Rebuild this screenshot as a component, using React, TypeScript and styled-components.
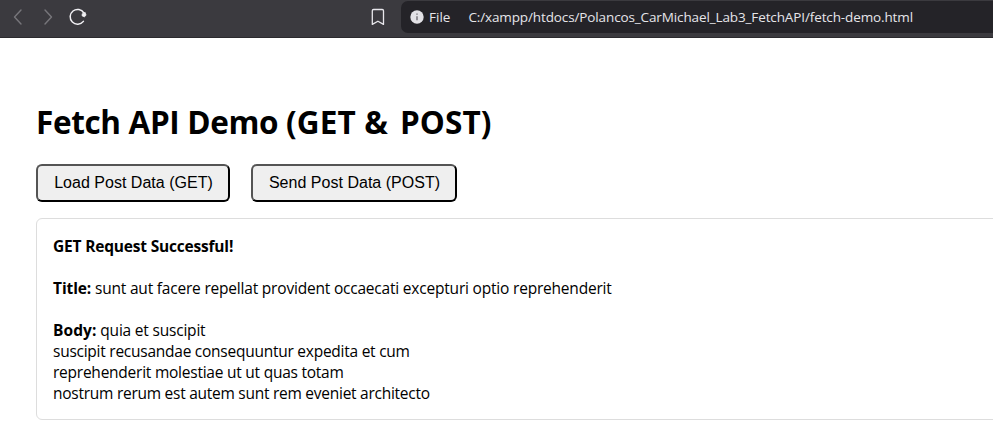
import React from "react";
import styled, { createGlobalStyle } from "styled-components";

const GlobalStyle = createGlobalStyle`
  *, *::before, *::after { box-sizing: border-box; }
  html, body { margin: 0; background: #fff; overflow: hidden; }
  body { color: #000; font-family: "Segoe UI", "Open Sans", "Noto Sans", sans-serif; }
`;

const Browser = styled.div`
  height: 422px;
  overflow: hidden;
`;

const Toolbar = styled.header`
  display: flex;
  align-items: flex-start;
  height: 38px;
  background: #3b3a3f;
  border-bottom: 1px solid #2b2a2e;
`;

const NavIcons = styled.div`
  flex: 1;
  display: flex;
  height: 34px;
  svg { display: block; }
`;

const BookmarkSlot = styled.div`
  width: 35px;
  svg { display: block; }
`;

const AddressBar = styled.div`
  display: flex;
  align-items: center;
  width: 602px;
  height: 32px;
  margin-top: 1px;
  margin-right: -10px;
  padding-left: 9px;
  border-radius: 7px;
  background: #242328;
  color: #e6e5ea;
`;

const AddressText = styled.span<{ $gap: number; $spacing: number }>`
  margin-left: ${(p) => p.$gap}px;
  font-size: 13.5px;
  line-height: 18px;
  letter-spacing: ${(p) => p.$spacing}px;
  white-space: nowrap;
`;

const Page = styled.main`
  padding: 61px 0 0 36px;
`;

const Heading = styled.h1`
  margin: 0;
  height: 43px;
  line-height: 46px;
  font-size: 31.5px;
  font-weight: 700;
  white-space: pre;
`;

const HeadingPart = styled.span<{ $spacing: number }>`
  letter-spacing: ${(p) => p.$spacing}px;
`;

const Actions = styled.div`
  display: flex;
  gap: 21px;
  margin-top: 22px;
`;

const ActionButton = styled.button<{ $width: number }>`
  width: ${(p) => p.$width}px;
  height: 38px;
  padding: 0 0 0 1px;
  border: 2px outset #000;
  border-radius: 6px;
  background: #efefef;
  color: #000;
  font: 16px "Liberation Sans", Arial, sans-serif;
  letter-spacing: 0.02px;
  white-space: nowrap;
`;

const Output = styled.section`
  height: 202px;
  margin-top: 16px;
  margin-right: -10px;
  padding: 16px;
  border: 1px solid #ddd;
  border-radius: 6px;
`;

const Line = styled.div<{ $spacing?: number }>`
  height: 21px;
  line-height: 22px;
  font-size: 15.5px;
  letter-spacing: ${(p) => p.$spacing ?? 0}px;
  white-space: pre;
`;

const Label = styled.strong<{ $spacing?: number }>`
  font-weight: 700;
  letter-spacing: ${(p) => p.$spacing ?? 0}px;
`;

export default function App() {
  return (
    <Browser>
      <GlobalStyle />
      <Toolbar>
        <NavIcons>
          <svg width="100" height="34" fill="none" strokeLinecap="round" strokeLinejoin="round">
            <path d="M21 10L14.5 17L21 24" stroke="#77767b" strokeWidth="1.4" />
            <path d="M45 10L51.5 17L45 24" stroke="#77767b" strokeWidth="1.4" />
            <path d="M83.9 13A7.4 7.4 0 1 0 83.4 21.4" stroke="#f1f0f4" strokeWidth="1.5" />
            <path d="M85.2 12.6L86.1 15.2L84.3 16.9L82 15.8L82.2 14Z" fill="#f1f0f4" stroke="#f1f0f4" strokeWidth="0.7" />
          </svg>
        </NavIcons>
        <BookmarkSlot>
          <svg width="24" height="34" fill="none">
            <path d="M6.3 24.4V10.8Q6.3 9.5 7.6 9.5H16.2Q17.5 9.5 17.5 10.8V24.4L11.9 21.2Z" stroke="#e8e7ec" strokeWidth="1.3" strokeLinejoin="round" />
          </svg>
        </BookmarkSlot>
        <AddressBar>
          <svg width="14" height="14" viewBox="0 0 14 14">
            <circle cx="7" cy="7" r="6.7" fill="#e2e1e6" />
            <path d="M7 6.2V10.2M7 3.5V4.8" stroke="#6f6e74" strokeWidth="1.4" />
          </svg>
          <AddressText $gap={5} $spacing={0}>File</AddressText>
          <AddressText $gap={18} $spacing={-0.12}>
            C:/xampp/htdocs/Polancos_CarMichael_Lab3_FetchAPI/fetch-demo.html
          </AddressText>
        </AddressBar>
      </Toolbar>
      <Page>
        <Heading>
          <HeadingPart $spacing={-0.35}>Fetch API Demo </HeadingPart>
          <HeadingPart $spacing={0.1}>(GET </HeadingPart>
          <HeadingPart $spacing={2}>&amp; </HeadingPart>
          <HeadingPart $spacing={0.1}>POST)</HeadingPart>
        </Heading>
        <Actions>
          <ActionButton $width={194}>Load Post Data (GET)</ActionButton>
          <ActionButton $width={206}>Send Post Data (POST)</ActionButton>
        </Actions>
        <Output>
          <Line><Label $spacing={-0.19}>GET Request Successful!</Label></Line>
          <Line />
          <Line $spacing={-0.2}><Label $spacing={-0.1}>Title:</Label> sunt aut facere repellat provident occaecati excepturi optio reprehenderit</Line>
          <Line />
          <Line $spacing={-0.2}><Label $spacing={0.08}>Body:</Label> quia et suscipit</Line>
          <Line $spacing={-0.25}>suscipit recusandae consequuntur expedita et cum</Line>
          <Line $spacing={-0.24}>reprehenderit molestiae ut ut quas totam</Line>
          <Line $spacing={-0.26}>nostrum rerum est autem sunt rem eveniet architecto</Line>
        </Output>
      </Page>
    </Browser>
  );
}
